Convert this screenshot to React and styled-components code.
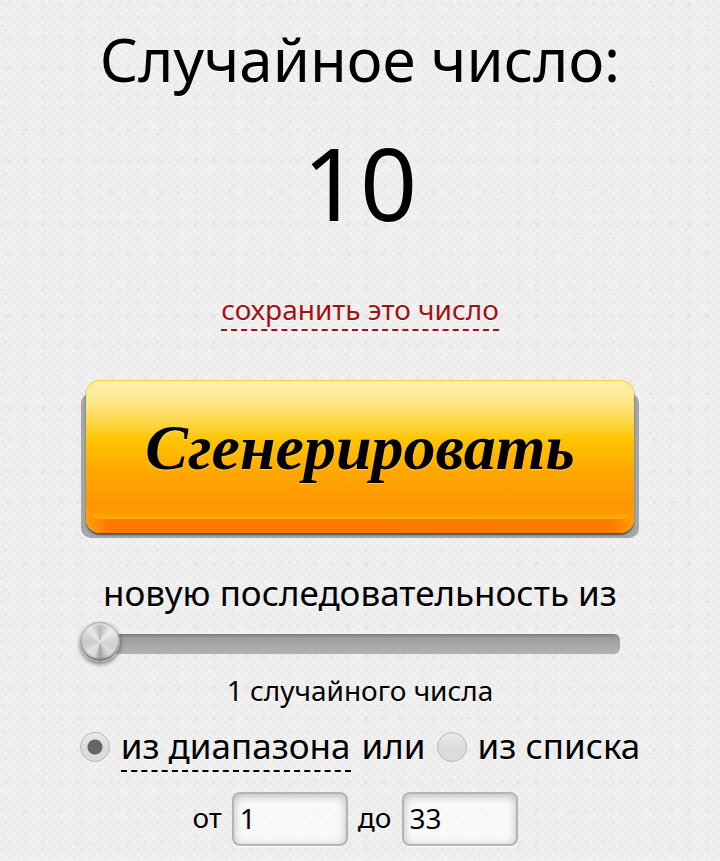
import { useState } from "react";
import styled, { createGlobalStyle } from "styled-components";

const GlobalStyle = createGlobalStyle`
    * {
        box-sizing: border-box;
    }

    body {
        margin: 0;
        min-height: 100vh;
        color: #000;
        font-family: "Noto Sans", "Open Sans", sans-serif;
        background-color: #f0f0f0;
        background-image:
            radial-gradient(circle at 2px 2px, rgba(0, 0, 0, 0.05) 0, transparent 2px),
            radial-gradient(circle at 6px 6px, rgba(0, 0, 0, 0.05) 0, transparent 2px),
            radial-gradient(circle at 8px 9px, rgba(255, 255, 255, 0.2) 0, transparent 8px),
            radial-gradient(circle at 5px 4px, rgba(0, 0, 0, 0.03) 0, transparent 3px),
            radial-gradient(circle at 9px 6px, rgba(0, 0, 0, 0.03) 0, transparent 4px);
        background-size: 8px 8px, 8px 8px, 29px 23px, 19px 13px, 17px 31px;
    }
`;

const App = () => {
    const [number, setNumber] = useState(10);
    const [count, setCount] = useState(1);
    const [source, setSource] = useState("range");
    const [from, setFrom] = useState("1");
    const [to, setTo] = useState("33");

    const generate = () => {
        const min = Number(from);
        const max = Number(to);
        setNumber(min + Math.floor(Math.random() * (max - min + 1)));
    };

    return (
        <>
            <GlobalStyle />
            <SMain>
                <STitle>Случайное число:</STitle>
                <SNumber>{number}</SNumber>
                <SSaveLink href="#save">сохранить это число</SSaveLink>

                <SButton type="button" onClick={generate}>
                    <SButtonFace>Сгенерировать</SButtonFace>
                </SButton>

                <SSliderLabel htmlFor="count">новую последовательность из</SSliderLabel>
                <SSlider
                    id="count"
                    type="range"
                    min="1"
                    max="100"
                    value={count}
                    onChange={(e) => setCount(Number(e.target.value))}
                />
                <SCount>{count} случайного числа</SCount>

                <SSourceRow>
                    <SRadio
                        id="range"
                        type="radio"
                        name="source"
                        checked={source === "range"}
                        onChange={() => setSource("range")}
                    />
                    <SSourceLabel htmlFor="range" $dashed>из диапазона</SSourceLabel>
                    <span>или</span>
                    <SRadio
                        id="list"
                        type="radio"
                        name="source"
                        checked={source === "list"}
                        onChange={() => setSource("list")}
                    />
                    <SSourceLabel htmlFor="list">из списка</SSourceLabel>
                </SSourceRow>

                <SFields>
                    <SFieldLabel htmlFor="from">от</SFieldLabel>
                    <SInput id="from" type="text" value={from} onChange={(e) => setFrom(e.target.value)} />
                    <SFieldLabel htmlFor="to">до</SFieldLabel>
                    <SInput id="to" type="text" value={to} onChange={(e) => setTo(e.target.value)} />
                </SFields>
            </SMain>
        </>
    );
};

export default App;

const SMain = styled.main`
    display: flex;
    flex-direction: column;
    align-items: center;
    width: 100%;
    max-width: 560px;
    margin: 0 auto;
    padding: 19px 0 12px;
    text-shadow: 0 1px 0 #fff;
`;

const STitle = styled.h1`
    margin: 0;
    font-size: 60px;
    line-height: 80px;
    font-weight: 400;
`;

const SNumber = styled.p`
    margin: 13px 0 37px;
    font-size: 100px;
    line-height: 140px;
`;

const SSaveLink = styled.a`
    border-bottom: 2px dashed #a01212;
    color: #a01212;
    font-size: 28px;
    line-height: 40px;
    text-decoration: none;
`;

const SButton = styled.button`
    width: calc(100% - 12px);
    margin: 49px 0 38px;
    padding: 0 0 14px;
    border: 0;
    border-radius: 14px;
    background: linear-gradient(90deg, #ffa200, #ff7800 4%, #ff7a00 96%, #ffa200);
    box-shadow:
        0 2px 2px rgba(0, 0, 0, 0.55),
        9px 9px 0 -4px #a6a6a6,
        -9px 9px 0 -4px #a6a6a6;
    cursor: pointer;
`;

const SButtonFace = styled.span`
    display: flex;
    align-items: center;
    justify-content: center;
    height: 139px;
    padding-bottom: 4px;
    border-radius: 14px;
    background: linear-gradient(#fff1a8, #feea98 12%, #fdd84a 30%, #fec400 43%, #ffa800 66%, #ff9500 90%, #ff9800 95%, #ffb000);
    box-shadow: inset 0 1px 1px #f2cf4a;
    color: #000;
    font-family: "Liberation Serif", serif;
    font-size: 64px;
    font-style: italic;
    font-weight: 700;
    line-height: 80px;
    text-shadow: 0 1px 1px rgba(255, 255, 255, 0.4);
`;

const SSliderLabel = styled.label`
    font-size: 35px;
    line-height: 44px;
`;

const SSlider = styled.input`
    align-self: flex-start;
    width: calc(100% - 20px);
    height: 40px;
    margin: 9px 0 8px;
    background: transparent;
    appearance: none;

    &::-webkit-slider-runnable-track {
        height: 20px;
        border-radius: 0 6px 6px 0;
        background: linear-gradient(#7d7d7d, #9d9d9d 20%, #a8a8a8 60%, #b2b2b2) no-repeat right / calc(100% - 20px) 100%;
    }

    &::-webkit-slider-thumb {
        width: 40px;
        height: 40px;
        margin-top: -12px;
        border: 1px solid #a8a8a8;
        border-radius: 50%;
        background: conic-gradient(#b8b8b8, #d4d4d4 6%, #eee 12%, #d8d8d8 22%, #d0d0d0 30%, #dedede 38%, #c4c4c4 44%, #a0a0a0 50%, #d8d8d8 56%, #e2e2e2 63%, #cacaca 73%, #d0d0d0 80%, #eaeaea 90%, #b8b8b8);
        box-shadow: inset 0 -2px 2px #777, inset 0 2px 1px #ddd, 0 2px 4px rgba(0, 0, 0, 0.5);
        appearance: none;
    }
`;

const SCount = styled.p`
    margin: 0 0 16px;
    font-size: 28px;
    line-height: 36px;
`;

const SSourceRow = styled.div`
    display: flex;
    align-items: flex-start;
    gap: 11px;
    font-size: 35px;
    line-height: 44px;
    white-space: nowrap;
`;

const SSourceLabel = styled.label`
    padding-bottom: 2px;
    border-bottom: 2px dashed ${props => props.$dashed ? "#000" : "transparent"};
`;

const SRadio = styled.input`
    flex: none;
    width: 30px;
    height: 30px;
    margin: 8px 0 0;
    border: 1px solid #b8b8b8;
    border-radius: 50%;
    background: linear-gradient(#ececec, #dcdcdc 50%);
    appearance: none;

    &:checked {
        background: radial-gradient(circle, #666 7px, transparent 8px), linear-gradient(#ececec, #dcdcdc 50%);
    }
`;

const SFields = styled.div`
    display: flex;
    align-items: center;
    gap: 10px;
    margin-top: 20px;
    padding-right: 10px;
    font-size: 28px;
    line-height: 36px;
`;

const SFieldLabel = styled.label`
    padding-bottom: 4px;
`;

const SInput = styled.input`
    width: 116px;
    height: 54px;
    padding: 0 6px 2px;
    border: 2px solid #b4b4b4;
    border-radius: 8px;
    background: rgba(255, 255, 255, 0.6);
    box-shadow: inset 0 2px 8px rgba(0, 0, 0, 0.25), 0 1px 0 #fff;
    color: #000;
    font: inherit;
`;
